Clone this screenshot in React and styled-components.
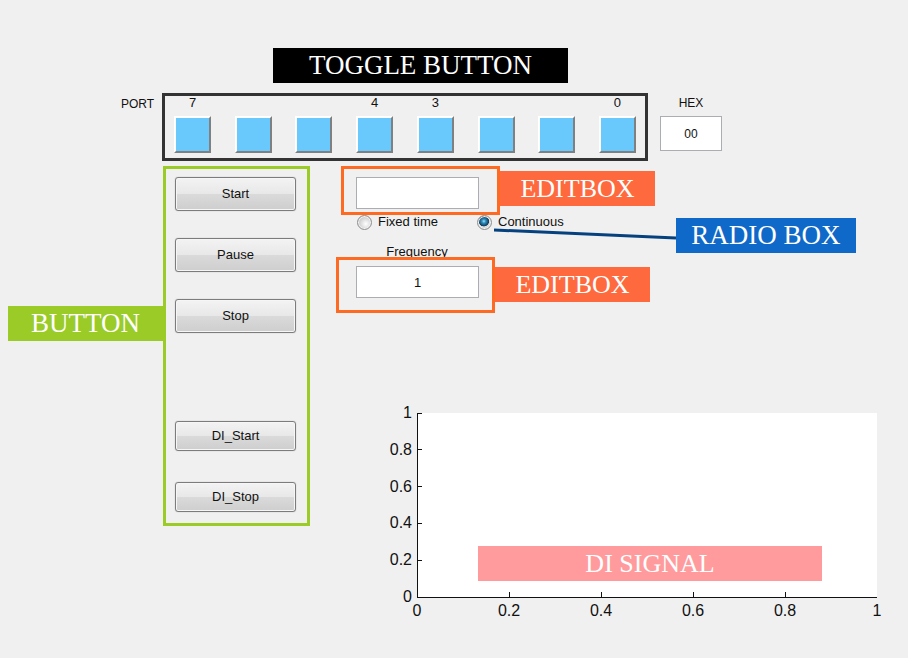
import React, { useState } from "react";
import styled, { createGlobalStyle } from "styled-components";

const GlobalStyle = createGlobalStyle`
  *, *::before, *::after { box-sizing: border-box; }
  body {
    margin: 0;
    background: #f0f0f0;
    color: #111;
    font: 13px/14px "Liberation Sans", Arial, sans-serif;
  }
  button, input { font: inherit; color: inherit; margin: 0; }
`;

const Page = styled.main`
  display: flex;
  flex-direction: column;
  min-height: 100vh;
  padding: 48px 0 32px;
`;

const Tag = styled.div`
  flex: none;
  width: ${(p) => p.$width || "auto"};
  height: 35px;
  margin: ${(p) => p.$margin || "0"};
  background: ${(p) => p.$color};
  color: #fff;
  font-family: "Liberation Serif", "Times New Roman", serif;
  font-size: ${(p) => (p.$small ? "26px" : "27px")};
  line-height: 35px;
  text-align: center;
  white-space: nowrap;
`;

const PortRow = styled.section`
  display: flex;
  margin: 10px 186px 5px 121px;
`;

const PortLabel = styled.span`
  width: 41px;
  padding-top: 4px;
  font-size: 12px;
`;

const PortFrame = styled.div`
  flex: 1;
  display: flex;
  justify-content: space-between;
  padding: 0 9px 5px;
  border: 3px solid #333;
`;

const Bit = styled.div`
  display: flex;
  flex-direction: column;
  gap: 6px;
  width: 37px;
  text-align: center;
`;

const BitCaption = styled.span`
  height: 14px;
`;

const Toggle = styled.button`
  width: 37px;
  height: 37px;
  padding: 0;
  border: 2px solid;
  border-color: ${(p) => (p.$on ? "#808080 #fff #fff #808080" : "#fff #808080 #808080 #fff")};
  background: #69c8fc;
`;

const HexField = styled.label`
  display: flex;
  flex-direction: column;
  gap: 6px;
  width: 62px;
  margin: 3px 0 0 12px;
  font-size: 12px;
  text-align: center;
`;

const TextInput = styled.input`
  display: block;
  width: 100%;
  height: ${(p) => p.$height || "32px"};
  padding: 0;
  border: 1px solid #abadb3;
  outline: 0;
  background: #fff;
  text-align: center;
`;

const Body = styled.div`
  display: flex;
  align-items: flex-start;
  padding-left: 8px;
`;

const ButtonFrame = styled.div`
  flex: none;
  display: grid;
  grid-template-rows: repeat(6, 34px);
  row-gap: 27px;
  align-items: start;
  width: 147px;
  padding: 8px 11px 7px 9px;
  border: 3px solid #9acb27;
`;

const PushButton = styled.button`
  grid-row: ${(p) => p.$row};
  height: ${(p) => (p.$short ? "30px" : "34px")};
  padding: 0;
  border: 1px solid #7c7c7c;
  border-radius: 3px;
  background: linear-gradient(#f3f3f3, #e8e8e8 49%, #dadada 51%, #cecece);
  box-shadow: inset 0 0 0 1px #f6f6f6, 0 0 1px #999;
`;

const Panel = styled.div`
  flex: 1;
  min-width: 0;
`;

const EditRow = styled.div`
  display: flex;
  align-items: flex-start;
  position: relative;
  margin: ${(p) => p.$margin};
`;

const EditFrame = styled.div`
  width: ${(p) => p.$width};
  padding: ${(p) => p.$padding};
  border: 3px solid #ff6a22;
  background: #f0f0f0;
`;

const ModeRow = styled.div`
  display: flex;
  margin-left: 47px;
`;

const ModeControls = styled.div`
  width: 319px;
`;

const Radios = styled.div`
  display: flex;
  height: 30px;
`;

const RadioLabel = styled.label`
  display: flex;
  align-items: center;
  gap: 6px;
  width: 120px;
  height: 14px;
`;

const Radio = styled.input`
  appearance: none;
  flex: none;
  width: 15px;
  height: 15px;
  border: 1px solid #8e8f8f;
  border-radius: 50%;
  background: radial-gradient(circle at 60% 60%, #fff, #cfcfcf 60%, #c4c4c4);
  box-shadow: inset 0 0 0 1px #f4f4f4;

  &:checked {
    background: radial-gradient(circle at 45% 40%, #9be3f7 0, #2f8fc0 18%, #123c5c 46%, #dcdcdc 52%, #c9c9c9);
  }
`;

const FrequencyLabel = styled.label`
  display: block;
  width: 120px;
  text-align: center;
`;

const Callout = styled.div`
  position: relative;
  padding-top: 3px;
`;

const Pointer = styled.svg`
  position: absolute;
  right: 100%;
  top: 10px;
  width: 182px;
  height: 16px;
`;

const Chart = styled.figure`
  display: flex;
  margin: 91px 31px 0 78px;
`;

const YLabels = styled.div`
  display: flex;
  flex-direction: column;
  justify-content: space-between;
  align-items: flex-end;
  width: 24px;
  height: 202px;
  margin-right: 5px;
  font-size: 16px;
  line-height: 18px;
`;

const PlotColumn = styled.div`
  flex: 1;
  padding-top: 9px;
`;

const Plot = styled.div`
  position: relative;
  display: flex;
  align-items: flex-end;
  height: 185px;
  padding: 0 55px 16px 60px;
  border: solid #111;
  border-width: 0 0 1px 1px;
  background: #fff;
`;

const Ticks = styled.svg`
  position: absolute;
  inset: 0;
  width: 100%;
  height: 100%;
`;

const XLabels = styled.div`
  display: flex;
  justify-content: space-between;
  padding-top: 4px;
  font-size: 16px;
  line-height: 18px;
`;

const XLabel = styled.span`
  display: flex;
  justify-content: center;
  width: 0;
`;

const SignalTag = styled(Tag)`
  flex: 1;
  position: relative;
`;

const BITS = [7, 6, 5, 4, 3, 2, 1, 0];
const CAPTIONED = [7, 4, 3, 0];
const SCALE = ["0", "0.2", "0.4", "0.6", "0.8", "1"];

export default function App() {
  const [port, setPort] = useState(0);
  const [mode, setMode] = useState("continuous");
  const [duration, setDuration] = useState("");
  const [frequency, setFrequency] = useState("1");
  const hex = port.toString(16).toUpperCase().padStart(2, "0");

  return (
    <Page>
      <GlobalStyle />
      <Tag $color="#000" $width="295px" $margin="0 0 0 273px">TOGGLE BUTTON</Tag>

      <PortRow>
        <PortLabel>PORT</PortLabel>
        <PortFrame>
          {BITS.map((bit) => (
            <Bit key={bit}>
              <BitCaption>{CAPTIONED.includes(bit) ? bit : ""}</BitCaption>
              <Toggle
                type="button"
                aria-label={`Bit ${bit}`}
                aria-pressed={Boolean(port & (1 << bit))}
                $on={Boolean(port & (1 << bit))}
                onClick={() => setPort(port ^ (1 << bit))}
              />
            </Bit>
          ))}
        </PortFrame>
        <HexField>
          HEX
          <TextInput $height="35px" value={hex} readOnly />
        </HexField>
      </PortRow>

      <Body>
        <Tag $color="#9acb27" $width="155px" $margin="140px 0 0">BUTTON</Tag>
        <ButtonFrame>
          <PushButton type="button" $row={1}>Start</PushButton>
          <PushButton type="button" $row={2}>Pause</PushButton>
          <PushButton type="button" $row={3}>Stop</PushButton>
          <PushButton type="button" $row={5} $short>DI_Start</PushButton>
          <PushButton type="button" $row={6} $short>DI_Stop</PushButton>
        </ButtonFrame>

        <Panel>
          <EditRow $margin="0 0 0 31px">
            <EditFrame $width="159px" $padding="8px 18px 3px 12px">
              <TextInput
                aria-label="Fixed time duration"
                value={duration}
                onChange={(e) => setDuration(e.target.value)}
              />
            </EditFrame>
            <Tag $color="#ff693e" $width="155px" $margin="5px 0 0" $small>EDITBOX</Tag>
          </EditRow>

          <ModeRow>
            <ModeControls>
              <Radios>
                <RadioLabel>
                  <Radio type="radio" name="mode" checked={mode === "fixed"} onChange={() => setMode("fixed")} />
                  Fixed time
                </RadioLabel>
                <RadioLabel>
                  <Radio type="radio" name="mode" checked={mode === "continuous"} onChange={() => setMode("continuous")} />
                  Continuous
                </RadioLabel>
              </Radios>
              <FrequencyLabel htmlFor="frequency">Frequency</FrequencyLabel>
            </ModeControls>
            <Callout>
              <Pointer viewBox="0 0 182 16" aria-hidden="true">
                <line x1="0" y1="5" x2="182" y2="13" stroke="#05417f" strokeWidth="3" />
              </Pointer>
              <Tag $color="#0f69c9" $width="180px">RADIO BOX</Tag>
            </Callout>
          </ModeRow>

          <EditRow $margin="-2px 0 0 26px">
            <EditFrame $width="159px" $padding="6px 13px 12px 17px">
              <TextInput id="frequency" value={frequency} onChange={(e) => setFrequency(e.target.value)} />
            </EditFrame>
            <Tag $color="#ff693e" $width="155px" $margin="10px 0 0" $small>EDITBOX</Tag>
          </EditRow>

          <Chart aria-label="DI signal">
            <YLabels>
              {[...SCALE].reverse().map((v) => <span key={v}>{v}</span>)}
            </YLabels>
            <PlotColumn>
              <Plot>
                <Ticks aria-hidden="true" stroke="#111" strokeWidth="1" shapeRendering="crispEdges">
                  {[0, 20, 40, 60, 80].map((p) => (
                    <line key={p} x1="0" x2="4" y1={`${p}%`} y2={`${p}%`} />
                  ))}
                  <svg width="100%" height="100%" y="-5" overflow="visible">
                    {[20, 40, 60, 80, 100].map((p) => (
                      <line key={p} x1={`${p}%`} x2={`${p}%`} y1="100%" y2="110%" />
                    ))}
                  </svg>
                </Ticks>
                <SignalTag $color="#ff9b9d" $small>DI SIGNAL</SignalTag>
              </Plot>
              <XLabels>
                {SCALE.map((v) => <XLabel key={v}>{v}</XLabel>)}
              </XLabels>
            </PlotColumn>
          </Chart>
        </Panel>
      </Body>
    </Page>
  );
}
